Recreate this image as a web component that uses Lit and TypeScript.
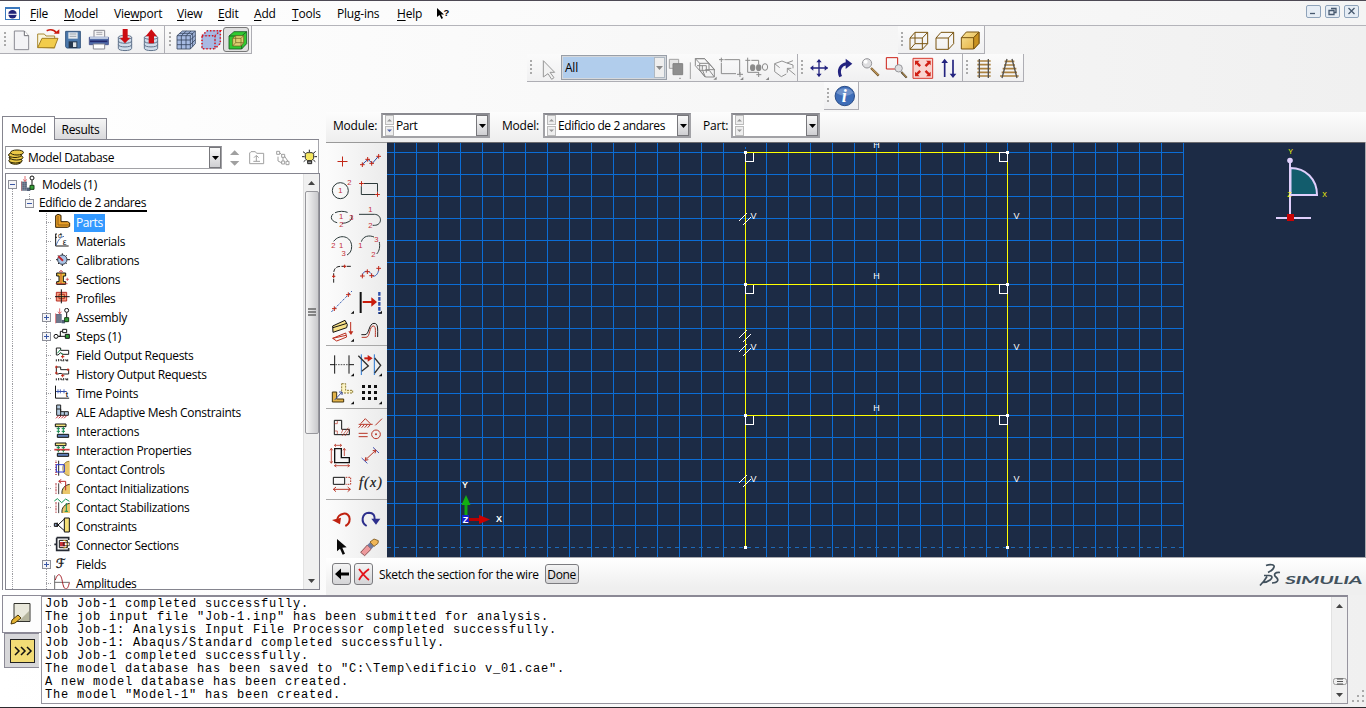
import { LitElement, html, svg, css, nothing } from "lit";
import { customElement } from "lit/decorators.js";
import { classMap } from "lit/directives/class-map.js";

// Icons are drawn on a grid of three units per CSS pixel.
const ico = (x: number, y: number, w: number, h: number, body: unknown) =>
  html`<svg class="ico" width=${w / 3} height=${h / 3} viewBox="${x} ${y} ${w} ${h}" fill="none" stroke-width="3">${body}</svg>`;

const num = (x: number, y: number, t: string) =>
  svg`<text x=${x} y=${y - 1} font-family="Liberation Sans, Arial, sans-serif" font-size="23" fill="#c4303a" text-anchor="middle">${t}</text>`;
const plus = (x: number, y: number, r = 7) =>
  svg`<path d="M${x - r} ${y}H${x + r}M${x} ${y - r}V${y + r}" stroke="#c22818" stroke-width="3"/>`;
const corner = (x: number, y: number) => svg`<path d="M${x} ${y}h-10l10-9z" fill="#111"/>`;

const menus: [string, string, string, number][] = [
  ["", "F", "ile", 34], ["", "M", "odel", 50], ["Vie", "w", "port", 63], ["", "V", "iew", 41],
  ["", "E", "dit", 36], ["", "A", "dd", 38], ["", "T", "ools", 45], ["Plu", "g", "-ins", 60], ["", "H", "elp", 40],
];

const dbCyl = svg`<path d="M355 112v33c0 9 40 9 40 0v-33" fill="#cfdcea" stroke="#62748c"/><path d="M355 123c0 9 40 9 40 0M355 134c0 9 40 9 40 0" stroke="#62748c"/><ellipse cx="375" cy="112" rx="20" ry="6" fill="#e3ecf5" stroke="#62748c"/>`;

const fileIcons = [
  ico(30, 84, 78, 72, svg`<path d="M43 93h30l13 14v42h-43z" fill="#f3f3f6" stroke="#8a8a92"/><path d="M73 93v14h13" fill="#fff" stroke="#6c6c74"/>`),
  ico(108, 84, 78, 72, svg`<path d="M113 142v-40h20l5 6h26v36z" fill="#fbf6dc" stroke="#a98a35"/><path d="M113 143l13-28h48l-11 28z" fill="#f2cc4b" stroke="#a37f23"/><path d="M140 92c12-5 22-3 29 6" stroke="#cc1c10" stroke-width="5"/><path d="M161 101h17v-13z" fill="#cc1c10"/>`),
  ico(186, 84, 78, 72, svg`<path d="M197 94h44v50h-41l-3-4z" fill="#4b78ab" stroke="#35567f"/><path d="M205 97h28v19h-28z" fill="#e6eaee"/><path d="M209 102h20M209 109h20" stroke="#9aa5af"/><path d="M206 124h26v20h-26z" fill="#26384e"/><path d="M219 127h10v14h-10z" fill="#dfe4e8"/>`),
  ico(264, 84, 78, 72, svg`<path d="M282 91h32v22h-32z" fill="#f5f5f5" stroke="#898991"/><path d="M289 97h18M289 103h18" stroke="#a6a6ac"/><path d="M268 112h57v22h-57z" fill="#4f6aa8" stroke="#4b5890"/><path d="M270 110h54v7h-54z" fill="#bcc8df"/><path d="M270 124h52" stroke="#23296c" stroke-width="5"/><path d="M280 132h34v15h-34z" fill="#fff" stroke="#898991"/>`),
  ico(342, 84, 78, 72, svg`${dbCyl}<path d="M368 87h15v26h8l-16 17-16-17h9z" fill="#cc0c12"/>`),
  ico(420, 84, 72, 72, svg`<g transform="translate(78 0)">${dbCyl}</g><path d="M446 130v-21h-9l17-21 17 21h-9v21z" fill="#cc0c12"/>`),
];
const meshIcons = [
  ico(519, 84, 75, 72, svg`<path d="M531 107l16-14h39v38l-15 16h-40z" fill="#a7bbe2"/><path d="M531 107h40v40h-40zM531 107l16-14h39l-15 14M586 93v38l-15 16M544 107v40M558 107v40M531 120h40l15-14M531 134h40l15-15M544 107l15-14M558 107l15-14M539 100h39v40" stroke="#34435c" stroke-width="2.400"/>`),
  ico(597, 84, 75, 72, svg`<path d="M609 107l16-15h39v38l-16 16h-39z" fill="#a9b9e2"/><path d="M609 107h39v39h-39zM609 107l16-15h39l-16 15M664 92v38l-16 16" stroke="#7888bd" stroke-width="2"/><path d="M609 107h39v39h-39zM609 107l16-15h39l-16 15M664 92v38l-16 16" stroke="#e01218" stroke-width="4.500" stroke-dasharray="4 6"/>`),
  html`<span class="pressed">${ico(678, 87, 75, 66, svg`<path d="M693 111l15-13h38v36l-15 16h-38z" fill="#31ca31"/><path d="M693 111h38v39h-38zM693 111l15-13h38l-15 13M746 98v36l-15 16" stroke="#155a20" stroke-width="2.500"/><path d="M704 118l9-8h24v21l-8 10h-25z" fill="#ddd072"/><path d="M704 118h25v23h-25zM704 118l9-8h24l-8 8M737 110v21l-8 10M713 110v21h24M713 131l-9 10" stroke="#6a5c1c" stroke-width="2"/>`)}</span>`,
];

const cube = svg`<path d="M15 27l15-17h38v34L52 61H15zM15 27h37v34M52 27l16-17"/>`;
const renderIcons = [
  ico(0, 0, 78, 72, svg`<g stroke="#7a5510" transform="translate(-3 3)">${cube}<path d="M30 10v34h38M30 44L15 61"/></g>`),
  ico(0, 0, 78, 72, svg`<g stroke="#7a5510" transform="translate(-3 3)">${cube}</g>`),
  ico(0, 0, 78, 72, svg`<defs><linearGradient id="gold" x1="0" y1="0" x2="1" y2="1"><stop stop-color="#f8e49a"/><stop offset="1" stop-color="#e3ac38"/></linearGradient></defs><g stroke="#7a5510" fill="url(#gold)" transform="translate(-5 2)">${cube}<path d="M52 27l16-17v34L52 61z" fill="#c99220"/></g>`),
];

const g = "#a2a2a2";
const selIcons = [
  ico(444, 98, 60, 78, svg`<path d="M451 111h28v27h-28z" fill="#e6e6e6" stroke=${g}/><path d="M462 124h29v33h-29z" fill="#8e8e8e" stroke="#828282"/><path d="M481 168h4" stroke="#777"/>`),
  ico(504, 98, 18, 78, svg`<path d="M514 120v50" stroke=${g}/>`),
  ico(522, 98, 78, 78, svg`<path d="M529 109v21l30 34h27v-22l-29-33zM529 109h28M542 123h28v21h-28zM534 130h28v21M529 109l14 15M557 109l30 33M543 144l15 20M559 142h28M550 130v12l9 22M571 144l15 20" stroke="#8b8b8b"/><path d="M593 172h-10l10-9z" fill="#888"/>`),
  ico(600, 98, 78, 78, svg`<path d="M607 122v32h44M616 112h46v43M600 112h14M607 106v14M654 156h18M663 149v15" stroke="#8b8b8b"/><path d="M673 173h-10l10-9z" fill="#888"/>`),
  ico(678, 98, 78, 78, svg`<path d="M686 106v44h34M679 114h15M697 114h22v12M712 157h15M719 150v14" stroke="#8b8b8b"/><ellipse cx="701" cy="136" rx="8" ry="10" fill="#8b8b8b"/><ellipse cx="719" cy="136" rx="8" ry="10" fill="#8b8b8b"/><ellipse cx="738" cy="134" rx="8" ry="10" stroke="#8b8b8b"/><path d="M750 173h-10l10-9z" fill="#888"/>`),
  ico(756, 98, 74, 78, svg`<path d="M767 124l22-8 15 6 18-7M767 124v24l20 15 15-8M767 124l15 12M804 122l18 6v10M805 138l24 20M805 138h12M805 138v13" stroke="#939393"/>`),
];
const viewIcons = [
  ico(858, 98, 78, 78, svg`<path d="M873 137h50M897 113v49" stroke="#23237f" stroke-width="4"/><path d="M870 137l10-8v16zM924 137l-10-8v16zM897 110l-8 10h16zM897 164l-8-10h16z" fill="#23237f"/>`),
  ico(936, 98, 78, 78, svg`<path d="M962 163c-9-18-1-37 18-39" stroke="#23237f" stroke-width="9"/><path d="M977 109l20 15-20 16z" fill="#23237f"/>`),
  ico(1014, 98, 78, 78, svg`<path d="M1053 137l23 23" stroke="#77582b" stroke-width="7"/><path d="M1055 138l20 20" stroke="#dfb36e" stroke-width="3"/><circle cx="1041" cy="123" r="14" fill="#dedee0" stroke="#96969a"/><circle cx="1037" cy="118" r="6" fill="#fff"/>`),
  ico(1092, 98, 78, 78, svg`<path d="M1099 106h34v34h-34z" stroke="#cc1f15"/><path d="M1144 149l16 17" stroke="#423620" stroke-width="6"/><path d="M1146 150l14 15" stroke="#dfb36e" stroke-width="3"/><circle cx="1136" cy="138" r="11" fill="#dedee0" stroke="#96969a"/>`),
  ico(1170, 98, 78, 78, svg`<path d="M1179 108h59v60h-59z" fill="#f9d5d0" stroke="#d63a30"/><path d="M1185 115h14l-5 5 9 9-5 5-9-9-4 4zM1232 115h-14l5 5-9 9 5 5 9-9 4 4zM1185 162h14l-5-5 9-9-5-5-9 9-4-4zM1232 162h-14l5-5-9-9 5-5 9 9 4-4z" fill="#d02014"/>`),
  ico(1248, 98, 78, 78, svg`<path d="M1274 164v-46M1299 112v46" stroke="#23237f" stroke-width="5"/><path d="M1264 122l10-13 10 13zM1289 154l10 13 10-13z" fill="#23237f"/>`),
];
const trackIcons = [
  ico(1353, 98, 78, 78, svg`<path d="M1372 116h40M1372 127h40M1372 139h40M1372 150h40M1372 161h40" stroke="#ab813f" stroke-width="5"/><path d="M1378 110v57M1405 110v57" stroke="#55524d" stroke-width="4"/>`),
  ico(1431, 98, 76, 78, svg`<path d="M1454 117h29M1452 128h33M1448 139h41M1445 150h46M1440 161h56" stroke="#ab813f" stroke-width="5"/><path d="M1461 110l-15 57M1476 110l15 57" stroke="#55524d" stroke-width="4"/>`),
];

// Sketcher toolbox
const cell = (c: number, y: number, body: unknown) => ico(18 + 84 * c, y, 84, 84, body);
const k = "#2c3a3a";
const tools: unknown[][] = [
  [
    cell(0, 105, plus(61.5, 148.5, 15)),
    cell(1, 105, svg`<path d="M120 158l18-16 13 12 19-22" stroke="#2d4ea2"/>${plus(121, 158)}${plus(137, 142)}${plus(149, 154)}${plus(170, 133)}`),
    cell(0, 189, svg`<circle cx="55" cy="236" r="24" stroke=${k}/>${num(55, 244, "1")}${num(82, 220, "2")}`),
    cell(1, 189, svg`<path d="M126 214.500h40.500v25M160 247.500h-42v-25" stroke=${k}/>${plus(118.5, 214.5)}${plus(166.5, 247.5)}`),
    cell(0, 273, svg`<ellipse cx="59" cy="316" rx="31" ry="18" stroke=${k} stroke-dasharray="38 14 38 6"/>${num(57, 323, "1")}${num(88, 326, "3")}${num(58, 347, "2")}`),
    cell(1, 273, svg`<path d="M111 307h46c24 0 25 33 0 33h-5" stroke=${k}/>${num(145, 302, "1")}${num(145, 349, "2")}`),
    cell(0, 357, svg`<path d="M35 388c18-24 54-16 54 16 0 13-6 21-14 25" stroke=${k}/>${num(34, 409, "2")}${num(57, 408, "1")}${num(65, 433, "3")}`),
    cell(1, 357, svg`<path d="M118 389c6-18 24-20 38-14M172 390c2 14 1 26-8 36" stroke=${k}/>${num(115, 408, "1")}${num(163, 391, "3")}${num(154, 435, "2")}`),
    cell(0, 441, svg`<path d="M35 512v-26c0-16 7-23 22-23h31" stroke="#222" stroke-dasharray="12 4"/>${plus(68, 463, 5)}${plus(35, 493, 5)}`),
    cell(1, 441, svg`<path d="M121 492c1-21 26-16 28-3 3 9 21 2 21-19" stroke="#3f64b5"/>${plus(121, 492)}${plus(136, 479)}${plus(149, 491)}${plus(170, 469)}`),
    cell(0, 525, svg`<path d="M28 600l62-63" stroke="#3f64b5" stroke-dasharray="8 4"/>${plus(37, 590)}${plus(79, 548)}${corner(96, 605)}`),
    cell(1, 525, svg`<path d="M116 540v63" stroke="#111" stroke-width="6"/><path d="M172 540v66" stroke="#2c4eab" stroke-width="7" stroke-dasharray="11 4"/><path d="M122 570h28" stroke="#c91c0c" stroke-width="6"/><path d="M148 556l17 14-17 14z" fill="#c91c0c"/>${corner(180, 605)}`),
    cell(0, 609, svg`<path d="M32 642l37-17 7 13-2 9-41 14z" fill="#f8e288" stroke="#111"/><path d="M33 647l42-13" stroke="#111"/><path d="M32 679l12 8 30-12-3-12zM32 679l40-9M86 630v34" stroke="#bd2e1f"/><path d="M79 658h15l-7 11z" fill="#bd2e1f"/>${corner(96, 689)}`),
    cell(1, 609, svg`<path d="M118 668h11c13 0 11-34 27-34 13 0 11 16 11 41" stroke="#1d1d1d"/><path d="M119 676h13c13 0 9-34 22-34 8 0 6 13 6 33" stroke="#b83527"/>`),
  ],
  [
    cell(0, 33, svg`<path d="M24 74h15M81 74h15M38 46v55M81 46v55" stroke="#151515"/><path d="M40 74h42" stroke="#555" stroke-dasharray="5 3"/>${corner(96, 109)}`),
    cell(1, 33, svg`<path d="M118 43v62M157 43v62" stroke="#2574cf"/><path d="M109 47l30 31-20 16M158 54l18 22-18 23" stroke="#303030" stroke-width="4"/><path d="M127 55h11" stroke="#ca1d11" stroke-width="6"/><path d="M137 45l15 10-15 10z" fill="#ca1d11"/>${corner(180, 109)}`),
    cell(0, 117, svg`<path d="M59 131h12v20h21v8H59z" fill="#fcf4c3" stroke="#8c7b36" stroke-dasharray="6 3"/><path d="M31 156h13v21h21v9H31z" fill="#e3b34a" stroke="#42340d"/><path d="M38 180l22-24M60 156v9M60 156h-9" stroke="#3c52a4"/>${corner(96, 193)}`),
    cell(1, 117, svg`${[124.5, 142.5, 160.5].map((x) => [139.5, 157.5, 175.5].map((y) => svg`<path d="M${x - 4.5} ${y - 4.5}h9v9h-9z" fill="#111"/>`))}${corner(180, 193)}`),
  ],
  [
    cell(0, 222, svg`<path d="M37 241h22v27h23v16H37z" stroke="#111"/><path d="M38 251h8v-8M38 273h8v9M63 268l-5 12M60 288l19-25M69 288l14-22" stroke="#b83527" stroke-width="2"/>`),
    cell(1, 222, svg`<path d="M110 253h42M116 251l14-15 15 15M110 263l8-9M119 263l8-9M128 263l8-9M137 263l8-9M160 256l20-20M110 280h27M110 290h27" stroke="#b83527"/><circle cx="162" cy="283" r="13" stroke="#b83527"/><circle cx="162" cy="283" r="3" fill="#b83527"/>`),
    cell(0, 306, svg`<path d="M38 326h20v27h24v15H38z" stroke="#111" stroke-width="4"/><path d="M38 316h20M28 326v43M67 326v22M38 377h44M42 312l-5 4 5 4M54 312l5 4-5 4M24 331l4-6 4 6M24 364l4 6 4-6M63 331l4-6 4 6M43 373l-6 4 6 4M77 373l6 4-6 4" stroke="#b83527" stroke-width="2.500"/>`),
    cell(1, 306, svg`<path d="M119 354l17 16M153 322l18 17" stroke="#4051b2"/><path d="M129 361l33-31M129 361l3-10M129 361l10-2M162 330l-3 10M162 330l-10 2" stroke="#b83527"/>`),
    cell(0, 390, svg`<path d="M34 412h34v21H34z" stroke="#111"/><path d="M71 412h15v21H71" stroke="#b83527" stroke-dasharray="5 3"/><path d="M34 448h51M42 441l-8 7 8 7M77 441l8 7-8 7" stroke="#b83527"/>`),
    cell(1, 390, svg`<text x="111" y="442" font-family="Liberation Serif, serif" font-size="42" font-style="italic" letter-spacing="0" fill="#111" stroke="#111" stroke-width=".7" textLength="69">f(x)</text>`),
  ],
  [
    cell(0, 495, svg`<path d="M45 541c2-23 37-29 38-4 0 12-5 17-13 21" stroke="#bf210f" stroke-width="6"/><path d="M30 540l27-7-3 20z" fill="#bf210f"/>`),
    cell(1, 495, svg`<path d="M134 558c-19-11-15-39 7-40 13 0 18 9 17 21" stroke="#2d2f8c" stroke-width="6"/><path d="M148 536h27l-13 18z" fill="#2d2f8c"/>`),
    cell(0, 579, svg`<path d="M45 597v37l9-8 8 18 7-3-8-18 13-1z" fill="#090909"/>`),
    cell(1, 579, svg`<path d="M116 637l20-22 12 12-20 20z" fill="#ee9a9c" stroke="#8b5355"/><path d="M136 615l10-10 12 12-10 10z" fill="#707a9e"/><path d="M144 606l12-9 13 5-1 8-12 9z" fill="#f0b657" stroke="#8d672e"/>`),
  ],
];

// Model tree icons
const t = (y: number, body: unknown) => ico(159, y, 54, 57, body);
const asmBody = svg`<path d="M168 132h17v27h-17z" fill="#536078"/><path d="M171 132v27M177 132v27M183 132v27M168 138h17M168 144h17M168 150h28M168 156h28" stroke="#aab1bd" stroke-width="1"/><path d="M185 150h10v10h-10z" fill="#536078"/><path d="M179 115v15M174 125l5 7 5-7M167 130v30" stroke="#cc252c" stroke-width="2"/><circle cx="200" cy="121" r="6" stroke="#111" fill="#fff"/><path d="M200 128v15" stroke="#111"/><path d="M194 143h12v12h-12z" fill="#36a239" stroke="#143c14"/>`;
const intBody = svg`<path d="M166 39h32v8h-32z" fill="#f5e47e" stroke="#111"/><path d="M172 70h34v9h-34z" fill="#607fb9" stroke="#111"/><path d="M175 47v20M190 47v20M170 53h10M170 61h10M185 53h10M185 61h10" stroke="#15894e"/>`;
const hatch = svg`<path d="M168 0v44" stroke="#b53c43" stroke-width="6" stroke-dasharray="2 3"/><path d="M176 0v45" stroke="#222"/>`;
const wedge = svg`<path d="M210 3v41h-24c-2-22 8-39 24-41z" fill="#eac76b"/><path d="M209 3c-15 3-25 19-23 41" stroke="#111"/>`;
const treeIcons: Record<string, unknown> = {
  Parts: t(303, svg`<path d="M167 311l7-4 9 3v19h20l6 4v10l-6 3h-36z" fill="#e99f28" stroke="#352204"/><path d="M174 312v27h34" stroke="#905e13"/>`),
  Materials: t(360, svg`<path d="M167 366v36h39M166 366h5M166 376h5M180 366h5" stroke="#171717"/><text x="174" y="378" font-size="20" font-family="Liberation Sans, sans-serif" fill="#171717">σ</text><path d="M168 400c8-19 13-24 24-27" stroke="#4a72b6"/><text x="188" y="399" font-size="26" font-family="Liberation Sans, sans-serif" fill="#171717">ε</text>`),
  Calibrations: t(417, svg`<path d="M187 424v38M168 443h42M174 430l26 26M200 430l-26 26" stroke="#222" stroke-width="3"/><circle cx="187" cy="443" r="14" fill="#a9c4e6" stroke="#333a49"/><path d="M189 446l-14-13" stroke="#c3262d" stroke-width="6"/>`),
  Sections: t(0, svg`<path d="M170 9h27v9h-7v17h7v8h-27v-8h7V18h-7z" fill="#ebbd3c" stroke="#111"/><path d="M183 4v39M167 41h36M197 28h10M202 23v10" stroke="#c42832" stroke-width="2"/><path d="M178 6l5-5 5 5" stroke="#c42832"/>`),
  Profiles: t(57, svg`<path d="M169 67h31v26h-31z" fill="#f39e7f" stroke="#b83027"/><path d="M177 73h16v13h-16z" fill="#f5b46e" stroke="#b83027"/><path d="M184 58v42M165 80h44" stroke="#151515"/>`),
  Assembly: t(114, asmBody),
  "Steps (1)": t(171, svg`<circle cx="168" cy="199" r="6" stroke="#151515" fill="#fff"/><path d="M175 199h6v-15h6M175 199h20" stroke="#151515"/><path d="M188 178h12v10h-12z" fill="#fff" stroke="#151515"/><path d="M196 193h12v12h-12z" fill="#2f9c35" stroke="#151515"/>`),
  "Field Output Requests": t(228, svg`<path d="M169 234h13v7h24v12h-18l-6-5-8 7h-5z" stroke="#222"/><path d="M172 250l10-12M182 250l8 3" stroke="#17864b"/>${plus(188, 260, 5)}<path d="M169 268v6M176 267v7M191 267v7M203 268v6M180 270h6v4M195 270h5v4" stroke="#222"/>`),
  "History Output Requests": t(285, svg`<path d="M169 291h13v8h24v13h-18l-8-2-6 2h-5z" stroke="#222"/>${plus(169, 291, 4)}${plus(169, 309, 4)}${plus(204, 299, 4)}${plus(188, 317, 5)}<path d="M169 325v6M176 324v7M191 324v7M203 325v6M180 327h6v4M195 327h5v4" stroke="#222"/>`),
  "Time Points": t(342, svg`<path d="M166.500 347v37.500h41" stroke="#171717"/><path d="M168 364.500h32" stroke="#3450a9"/><path d="M174 358v12M181 358v12M192 358v12" stroke="#3450a9" stroke-width="2.500"/><text x="197" y="381" font-size="20" font-weight="bold" font-family="Liberation Sans, sans-serif" fill="#171717">t</text>`),
  "ALE Adaptive Mesh Constraints": t(399, svg`<path d="M170 405h12v20h23v11h-35z" fill="#b4cbe0" stroke="#222"/><path d="M170 417h12v20M193 426v10" stroke="#222"/><path d="M168 445l8-8M176 445l8-8M184 445l8-8M192 445l8-8" stroke="#c12932"/>`),
  Interactions: t(33, intBody),
  "Interaction Properties": t(33, svg`${intBody}<path d="M163 59h46" stroke="#cd3a3d" stroke-width="5"/>`),
  "Contact Controls": t(90, svg`<g transform="translate(0 92)">${hatch}</g><path d="M209 92v45c-22 2-29-43 0-45z" fill="#eac76b"/><path d="M207 94c-25 2-25 40 0 43" stroke="#6c5b24" stroke-width="2"/><path d="M169 104h24v22h-24z" stroke="#2b38d0"/>`),
  "Contact Initializations": t(147, svg`<g transform="translate(0 160) scale(1 .72)">${hatch}</g><g transform="translate(0 161) scale(1 .7)">${wedge}</g><path d="M197 181v-27h-20M184 148l-8 6 8 6" stroke="#bb2a29"/>`),
  "Contact Stabilizations": t(204, svg`<g transform="translate(0 217) scale(1 .72)">${hatch}</g><g transform="translate(0 218) scale(1 .7)">${wedge}</g><path d="M163 213l9-7 13 12 12-11 11 7M199 219v25M194 244h10" stroke="#139151"/>`),
  Constraints: t(261, svg`<path d="M193 264h15v42h-15z" fill="#f5df76" stroke="#111"/><path d="M193 267l-19 18 19 17M172 278v13" stroke="#111"/><path d="M163 280h8v9h-8z" fill="#8ca1c5" stroke="#111"/>`),
  "Connector Sections": t(318, svg`<path d="M170 323h36v7M170 323v38h36v-7M163 343h8" stroke="#262a33" stroke-width="5"/><path d="M178 331h24v22h-24z" fill="#fff" stroke="#151515"/><path d="M180 336h15v13h-15z" fill="#cb343a"/><path d="M190 331c16 0 16 23 0 23" stroke="#d7a52a"/><path d="M190 338h18v9h-18z" stroke="#151515" stroke-width="2"/>`),
  Fields: t(375, svg`<text x="167" y="415" font-size="38" letter-spacing="0" font-family="DejaVu Sans, DejaVu Serif, serif" fill="#111" stroke="#111" stroke-width="1">ℱ</text>`),
  Amplitudes: t(432, svg`<path d="M164 436v42M163 457h46" stroke="#6e6e6e"/><path d="M166 450c6-20 16-24 21 4 5 31 16 29 21 4" stroke="#a52028"/>`),
};
const expandable = new Set(["Assembly", "Steps (1)", "Fields"]);

const xpBox = (x: number, open: boolean) =>
  svg`<rect x=${x - 4} y="5" width="9" height="9" fill="#f4f4f6" stroke="none"/><rect x=${x - 3.5} y="5.5" width="8" height="8" stroke="#8d8f98" stroke-width="1"/><path d="M${x - 2} 9.500h5${open ? "" : `M${x + 0.5} 7v5`}" stroke="#3a57a5" stroke-width="1"/>`;
const dots = (d: string) => svg`<path d=${d} stroke="#9d9da2" stroke-width="1" stroke-dasharray="1 1"/>`;

const xs = Array.from({ length: 37 }, (_, i) => Math.floor(745 + 21.91 * (i - 16))).filter((x) => x !== 745);
const ys = [152, 174, 196, 218, 240, 262, 284, 306, 328, 349, 371, 393, 415, 437, 459, 481, 503, 525];

const lines = [
  "Job Job-1 completed successfully.",
  'The job input file "Job-1.inp" has been submitted for analysis.',
  "Job Job-1: Analysis Input File Processor completed successfully.",
  "Job Job-1: Abaqus/Standard completed successfully.",
  "Job Job-1 completed successfully.",
  'The model database has been saved to "C:\\Temp\\edificio v_01.cae".',
  "A new model database has been created.",
  'The model "Model-1" has been created.',
];

@customElement("app-root")
export class AppRoot extends LitElement {
  static styles = css`
    :host { display: flex; flex-direction: column; width: 1366px; height: 708px; box-sizing: border-box; overflow: hidden;
      border-top: 1px solid #4d4954; border-bottom: 1px solid #2d2a2e; color: #000;
      background: linear-gradient(90deg, #fff, #f0f0f0); font: 12px/15px "Open Sans", "Noto Sans", sans-serif; letter-spacing: -0.22px; }
    * { box-sizing: border-box; }
    svg { display: block; flex: none; }
    .ico { overflow: hidden; }
    .menubar { height: 25px; flex: none; display: flex; align-items: center; padding-left: 5px; border-bottom: 1px solid #b4b4ba;
      background: linear-gradient(90deg, #fff, #f4f4f4); }
    .logo { margin-right: 10px; }
    .menu { flex: none; white-space: nowrap; }
    u { text-underline-offset: 2px; text-decoration-thickness: 1px; }
    .winbtns { margin-left: auto; display: flex; gap: 4px; padding: 0 7px 4px 0; }
    .bars { height: 86px; flex: none; }
    .barrow { display: flex; height: 28px; }
    .bar { display: flex; align-items: center; height: 28px; border-right: 1px solid #aeaeb4; border-bottom: 1px solid #aeaeb4;
      background: linear-gradient(#fbfbfb, #f0f0f1); }
    .grip { width: 2px; height: 15px; flex: none; background: repeating-linear-gradient(#aaa 0 2px, transparent 2px 4px); }
    .push { margin-left: 646px; }
    .row2 { padding-left: 527px; }
    .row3 { padding-left: 824px; }
    .pressed { display: block; border: 1px solid #777; border-radius: 3px; background: #dfdfdf; width: 26px; height: 25px; overflow: hidden; }
    .all { width: 106px; height: 25px; border: 1px solid #999fa8; outline: 1px solid #d5d8dc; outline-offset: -2px; background: #b1cdec; display: flex; align-items: center; padding-left: 3px; }
    .all .dd { margin-left: auto; width: 11px; height: 21px; border: 1px solid #aeb8c2; background: #eee; display: grid; place-items: center; margin-right: 1px; }
    .main { display: flex; height: 483px; flex: none; }
    .side { width: 322px; flex: none; display: flex; flex-direction: column; padding-left: 2px; }
    .tabs { display: flex; align-items: flex-end; height: 27px; flex: none; }
    .tab { border: 1px solid #85858f; border-bottom: none; width: 53px; height: 23px; display: grid; place-items: center; background: #fff; letter-spacing: 0; }
    .tab.off { height: 21px; width: 52px; background: linear-gradient(#f5f5f5, #d9d9dc); border-left: none; letter-spacing: -.35px; }
    .pane { width: 317px; height: 451px; flex: none; border-left: 1px solid #85858f; background: #fff; padding: 0 0 0 2px; display: flex; flex-direction: column; }
    .edge { height: 1px; margin: 0 0 0 49px; background: #85858f; flex: none; }
    .tools { height: 33px; flex: none; display: flex; align-items: center; border-right: 1px solid #a5a5ab; padding-top: 2px; }
    .combo { display: flex; align-items: center; background: #fff; border: 2px solid #a2a2a6; border-top-color: #8a8a90; height: 25px; letter-spacing: -.42px; }
    .db { width: 218px; height: 23px; border-width: 1px; padding-left: 1px; letter-spacing: -.35px; }
    .arrow { margin-left: auto; border: 1px solid #77777b; width: 12px; align-self: stretch; display: grid; place-items: center; background: linear-gradient(#fafafa, #cfcfd2); }
    .dbl { margin-left: 3px; }
    .tree { flex: 1; min-height: 0; border: 1px solid #85858f; width: 315px; display: flex; overflow: hidden; }
    .rows { flex: 1; overflow: hidden; padding-top: 1px; }
    .trow { display: flex; align-items: center; height: 19px; white-space: nowrap; }
    .lbl { margin-left: 3px; padding: 0 2px; height: 18px; line-height: 17px; letter-spacing: -.3px; }
    .lbl.sel { background: #3399ff; color: #fff; letter-spacing: -.42px; }
    .root { border-bottom: 2px solid #000; height: 16px; line-height: 13px; padding-right: 1px; letter-spacing: -.42px; }
    .sb { width: 16px; flex: none; background: #f0f0f0; border-left: 1px solid #e2e2e2; display: flex; flex-direction: column; align-items: center; }
    .sb .a { height: 17px; flex: none; display: grid; place-items: center; }
    .thumb { width: 14px; height: 243px; border: 1px solid #97979c; border-radius: 2px; background: linear-gradient(90deg, #f6f6f6, #c9c9cc); display: grid; place-items: center; }
    .sp { flex: 1; }
    .work { flex: 1; display: flex; flex-direction: column; padding-left: 4px; min-width: 0; }
    .modbar { height: 30px; flex: none; display: flex; align-items: center; background: linear-gradient(#fdfdfd, #eee); padding: 0 0 3px 7px; white-space: nowrap; }
    .mlabel { flex: none; }
    .spin { flex: none; margin: 0 2px 0 2px; }
    .stage { display: flex; height: 416px; flex: none; }
    .box { width: 61px; flex: none; overflow: hidden; background: linear-gradient(90deg, #fcfcfc, #ebebeb); border-top: 1px solid #999; }
    .sect { display: grid; grid-template-columns: 28px 28px; grid-auto-rows: 28px; padding: 5px 0 1px 2px; border-bottom: 1px solid #a8a8a8; }
    .sect.s0 { padding-top: 4px; padding-bottom: 2px; }
    .sect.s3 { border: none; padding-bottom: 0; }
    .view { flex: none; }
    .prompt { flex: 1; display: flex; align-items: center; background: linear-gradient(#fff, #efefef 80%); padding: 0 3px 5px 6px; }
    .btn { height: 22px; width: 19px; border: 1px solid #7b7b7f; border-radius: 3px; background: linear-gradient(#f4f4f4, #d4d4d6); display: grid; place-items: center; margin-right: 3px; flex: none; }
    .done { width: 34px; height: 20px; margin-left: 6px; letter-spacing: -.35px; }
    .ptxt { margin-left: 3px; letter-spacing: -.32px; }
    .simulia { margin-left: auto; }
    .bottom { flex: 1; display: flex; min-height: 0; }
    .mtabs { width: 41px; flex: none; display: flex; flex-direction: column; }
    .mt { border: 1px solid #8c8a96; border-right: none; display: grid; place-items: center; background: #fdfdfd; }
    .m1 { margin-left: 2px; height: 38px; }
    .m2 { margin: 0 2px 0 4px; height: 35px; background: #d7d7d9; }
    .log { width: 1307px; height: 109px; flex: none; background: #fff; border: 1px solid #96949e; border-top: 2px solid #8b8995; display: flex; }
    .lines { flex: 1; padding: 1px 0 0 3px; overflow: hidden; white-space: pre; font: 12px/13px "Liberation Mono", monospace; letter-spacing: .799px; }
    .corner { align-self: flex-end; margin: 0 0 4px 4px; }
  `;

  private arrow = (c = "#000") => html`<svg width="7" height="4" viewBox="0 0 7 4"><path d="M0 0h7L3.500 4z" fill=${c} /></svg>`;
  private up = html`<svg width="7" height="4" viewBox="0 0 7 4"><path d="M0 4h7L3.500 0z" fill="#444" /></svg>`;

  private spinner(c: string) {
    return html`<svg class="spin" width="9" height="21" viewBox="0 0 9 21" fill="none"><rect x=".5" y=".5" width="8" height="9" fill="#eee" stroke="#bbb"/><rect x=".5" y="11.500" width="8" height="9" fill="#eee" stroke="#bbb"/><path d="M2 6.500h5L4.500 4z" fill="#999"/><path d="M2 14.500h5L4.500 17z" fill=${c}/></svg>`;
  }

  private menubar() {
    return html`<div class="menubar">
      <svg class="logo" width="15" height="13" viewBox="0 0 15 13"><rect x=".5" y=".5" width="14" height="12" fill="#fff" stroke="#3b78bd"/><path d="M0 0h15v2H0z" fill="#3b78bd"/><circle cx="7.500" cy="7.300" r="4.200" fill="#22237a"/><path d="M3 7.300h9" stroke="#fff"/></svg>
      ${menus.map(([a, b, c, w]) => html`<span class="menu" style="width:${w}px">${a}<u>${b}</u>${c}</span>`)}
      <svg width="14" height="13" viewBox="0 0 14 13"><path d="M0 1v9l2.500-2 2 4 1.500-1-2-3.500h3z"/><text x="6.500" y="9" font-size="9.500" font-weight="bold" font-family="Liberation Sans, sans-serif">?</text></svg>
      <span class="winbtns">${["M3 8.500h5", "M5 3.500h5v4h-2M3 5.500h5v4h-5z", "M3.500 3l6 6M9.500 3l-6 6"].map((d) => html`<svg width="15" height="13" viewBox="0 0 15 13" fill="none"><rect x=".5" y=".5" width="14" height="12" rx="1.500" fill="#e6edf5" stroke="#8fa3ba"/><path d=${d} transform="translate(1)" stroke="#47596f" stroke-width="1.300"/></svg>`)}</span>
    </div>`;
  }

  private bars() {
    return html`<div class="bars">
      <div class="barrow">
        <div class="bar" style="width:165px;padding-left:4px"><span class="grip"></span><span style="width:4px"></span>${fileIcons.slice(0, 5)}<span style="margin-right:-2px">${fileIcons[5]}</span></div>
        <div class="bar" style="width:87px;padding-left:4px"><span class="grip"></span><span style="width:2px"></span>${meshIcons}</div>
        <div class="bar push" style="width:87px;padding-left:3px"><span class="grip"></span><span style="width:4px"></span>${renderIcons}</div>
      </div>
      <div class="barrow row2">
        <div class="bar" style="width:271px;padding-left:3px"><span class="grip"></span>
          ${ico(39, 98, 84, 78, svg`<path d="M73 115l34 35h-14l12 16-7 5-11-17-14 10z" stroke="#979797" fill="#f2f2f2"/>`)}
          <div class="all" style="margin-left:1px">All<span class="dd">${this.arrow("#8a8a8a")}</span></div>
          ${selIcons}</div>
        <div class="bar" style="width:165px;padding-left:3px"><span class="grip"></span><span style="width:3px"></span>${viewIcons}</div>
        <div class="bar" style="width:61px;padding-left:3px"><span class="grip"></span><span style="width:3px"></span>${trackIcons}</div>
      </div>
      <div class="barrow row3">
        <div class="bar" style="width:35px;padding-left:3px"><span class="grip"></span>
          <svg width="26" height="26" viewBox="0 0 26 26"><circle cx="15.800" cy="13" r="9.700" fill="#3e6db8" stroke="#284b87"/><path d="M7.300 10a9 7 0 0 1 17 0q-8 6-17 0z" fill="#6f92cb"/><text x="12.800" y="19" font-size="18" font-style="italic" font-weight="bold" font-family="Liberation Serif, serif" fill="#fff">i</text></svg>
        </div>
      </div>
    </div>`;
  }

  private tree() {
    const names = Object.keys(treeIcons);
    return html`<div class="tree">
      <div class="rows">
        <div class="trow">
          <svg width="15" height="19" viewBox="6 0 15 19" fill="none">${dots("M12.5 14v5")}${xpBox(12, true)}</svg>
          ${ico(63, 190, 48, 57, svg`<g transform="translate(-104 78)">${asmBody}</g>`)}
          <span class="lbl">Models (1)</span>
        </div>
        <div class="trow">
          <svg width="33" height="19" viewBox="6 0 33 19" fill="none">${dots("M12.5 0v19")}${dots("M29.5 0v5")}${xpBox(29, true)}</svg>
          <span class="root">Edificio de 2 andares</span>
        </div>
        ${names.map((n) => html`<div class="trow">
          <svg width="47" height="19" viewBox="6 0 47 19" fill="none">${dots("M12.5 0v19")}${dots("M46.5 0v19")}${dots("M46 9.500h6")}${expandable.has(n) ? xpBox(46, false) : nothing}</svg>
          ${treeIcons[n]}<span class=${classMap({ lbl: true, sel: n === "Parts" })}>${n}</span>
        </div>`)}
      </div>
      <div class="sb"><span class="a">${this.up}</span>
        <span class="thumb"><svg width="8" height="9" viewBox="0 0 8 9"><path d="M0 1h8M0 4h8M0 7h8" stroke="#666" stroke-width="1.500"/></svg></span>
        <span class="sp"></span><span class="a">${this.arrow("#444")}</span></div>
    </div>`;
  }

  private side() {
    return html`<div class="side">
      <div class="tabs"><span class="tab">Model</span><span class="tab off">Results</span></div>
      <div class="pane">
        <div class="edge"></div>
        <div class="tools">
          <div class="combo db">
            <svg width="18" height="17" viewBox="0 0 18 17" fill="#eac846" stroke="#2a2306"><path d="M2 11.500c0 5 13 5 13 0M2 8c0 5 13 5 13 0z"/><ellipse cx="8.500" cy="11.500" rx="6.500" ry="2.500"/><ellipse cx="9.500" cy="8.500" rx="6.500" ry="2.500"/><ellipse cx="8" cy="6" rx="6.500" ry="2.500"/><ellipse cx="10" cy="3.500" rx="6.500" ry="2.500"/></svg>
            <span class="dbl">Model Database</span><span class="arrow">${this.arrow()}</span>
          </div>
          ${ico(666, 102, 66, 66, svg`<path d="M690 126h28l-14-14zM690 144h28l-14 14z" fill="#a0a0a0"/>`)}
          ${ico(732, 102, 78, 66, svg`<path d="M749 152v-32l4-4h13l4 5h21v31zM760 145h20M769 145v-16M762 134l7-7 7 7" stroke="#a0a0a0"/>`)}
          ${ico(810, 102, 78, 66, svg`<path d="M830 115h9v9h-9zM845 124h9v9h-9zM845 144h9v9h-9zM858 145h9v10h-9zM839 119l6 6M849 133v11M834 131v13l12 6M854 130l10 15" stroke="#a0a0a0"/>`)}
          ${ico(888, 102, 66, 66, svg`<path d="M928 110v7M909 116l8 6M947 115l-8 7M906 131h8M943 131h8M911 146l6-5M946 146l-6-5" stroke="#222"/><path d="M920 119h17l4 5v12l-6 7h-13l-6-7v-12z" fill="#f5e65f" stroke="#333"/><path d="M923 144h12v8h-12z" fill="#999" stroke="#222"/>`)}
        </div>
        ${this.tree()}
      </div>
    </div>`;
  }

  private viewport() {
    const wt = (x: number, y: number, s: string, c = "#fff", fs = 9) =>
      svg`<text x=${x} y=${y} text-anchor="middle" font-size=${fs} fill=${c}>${s}</text>`;
    const par = (y: number) => svg`<path d="M739 ${y + 8}l8-8M743 ${y + 12}l8-8" stroke="#fff" shape-rendering="auto"/>`;
    return html`<svg class="view" width="979" height="416" viewBox="387 142 979 416" fill="none" font-family="Liberation Sans, Arial, sans-serif" letter-spacing="0" shape-rendering="crispEdges">
      <rect x="387" y="142" width="979" height="416" fill="#1c2b45"/>
      <path d="${xs.map((x) => `M${x + 0.5} 143v414`).join("")}${ys.map((y) => `M387 ${y + 0.5}h797`).join("")}" stroke="#0b6dd6"/>
      <path d="M387 547.500h797" stroke="#1c69b8" stroke-dasharray="4 4"/>
      <path d="M745.500 147v2" stroke="#0b6dd6"/>
      <path d="M745.500 152v395M1007.500 152v395M745 152.500h262M745 284.500h262M745 415.500h262" stroke="#ff0"/>
      ${[152, 284, 415].map((y) => svg`<path d="M745.500 ${y + 0.5}h8v9h-8zM999.500 ${y + 0.5}h8v9h-8z" stroke="#fff"/>`)}
      <path d="M747 152.500h252M747 284.500h252M747 415.500h252" stroke="#ff0"/>
      ${[152, 284, 415, 547].map((y) => svg`<path d="M744 ${y - 1}h3v3h-3zM1006 ${y - 1}h3v3h-3z" fill="#fff"/>`)}
      ${[148, 279, 411].map((y) => wt(876.5, y, "H"))}
      ${[219, 350, 482].map((y) => [wt(753.5, y, "V"), wt(1016.5, y, "V")])}
      ${[213, 330, 344, 475].map(par)}
      <g shape-rendering="auto">
        <path d="M466 518v-14" stroke="#10a510" stroke-width="3"/><path d="M461.500 505h9L466 495z" fill="#12b012"/>
        <path d="M469 519.500h11" stroke="#b90000" stroke-width="3"/><path d="M479 515v9l11-4.500z" fill="#c00"/>
        <rect x="462" y="515" width="7" height="8" fill="#141ecb"/>
        <g font-weight="bold">${wt(465, 488, "Y")}${wt(465.5, 523, "Z", "#fff", 9)}${wt(499, 522, "X", "#fff", 9)}</g>
        <path d="M1290.500 168c15 0 26.500 11 26.500 27h-26.500z" fill="#125c6c" stroke="#e0cffc" stroke-width="2"/>
        <path d="M1290 160v56M1276 218h35" stroke="#e0cffc" stroke-width="2"/>
        <circle cx="1290" cy="160.500" r="2.800" fill="#e0cffc"/><rect x="1287" y="214" width="7" height="7" fill="#c90505"/>
        ${wt(1290.5, 154, "Y", "#ff0", 7)}${wt(1324.5, 197, "X", "#ff0", 7)}${wt(1289.5, 197, "Z", "#ff0", 7)}
      </g>
      <path d="M387 142.500h979" stroke="#6a6a6e"/><path d="M387 557.500h979M1365.500 142v416" stroke="#a9a9ae"/>
    </svg>`;
  }

  render() {
    return html`${this.menubar()}${this.bars()}
      <div class="main">
        ${this.side()}
        <div class="work">
          <div class="modbar">
            <span class="mlabel" style="width:48px">Module:</span>
            <div class="combo" style="width:109px">${this.spinner("#5566a8")}Part<span class="arrow">${this.arrow()}</span></div>
            <span class="mlabel" style="width:41px;margin-left:12px">Model:</span>
            <div class="combo" style="width:148px">${this.spinner("#999")}Edificio de 2 andares<span class="arrow">${this.arrow()}</span></div>
            <span class="mlabel" style="width:28px;margin-left:12px">Part:</span>
            <div class="combo" style="width:89px">${this.spinner("#999")}<span class="arrow">${this.arrow()}</span></div>
          </div>
          <div class="stage">
            <div class="box">${tools.map((s, i) => html`<div class="sect s${i}">${s}</div>`)}</div>
            ${this.viewport()}
          </div>
          <div class="prompt">
            <span class="btn"><svg width="14" height="12" viewBox="0 0 14 12"><path d="M0 6l6-5.500V4.500h8v3H6V11.500z"/></svg></span>
            <span class="btn"><svg width="12" height="13" viewBox="0 0 12 13"><path d="M1 1c3 4 6 8 10 11M11 1C7 4 3 8 1 12" stroke="#e3131a" stroke-width="1.800" fill="none"/></svg></span>
            <span class="ptxt">Sketch the section for the wire</span><span class="btn done">Done</span>
            <svg class="simulia" width="105" height="26" viewBox="1259 561 105 26" fill="none"><path d="M1267 565.500c4-1.500 9-1 8 1.500-.500 2.500-3 4-6 5.500M1265 575.500h5c4 0 3.500 2.500 1 4.500-2 1.500-5 2.500-7 2.500l4-6M1264 582l-3 3.500M1281 572.500c-5-.500-7 2-4 4.500 3.500 3 1.500 6-4 6" stroke="#40505c" stroke-width="1.700"/><text x="1286" y="583.500" font-size="12" font-style="italic" font-weight="bold" font-family="Lato, sans-serif" fill="#43525e" textLength="77" lengthAdjust="spacingAndGlyphs">SIMULIA</text></svg>
          </div>
        </div>
      </div>
      <div class="bottom">
        <div class="mtabs">
          <span class="mt m1"><svg width="26" height="24" viewBox="0 0 26 24"><path d="M5 1.500h16v18H5z" fill="#e9e8db" stroke="#33332d"/><path d="M20 19V9L10 19z" fill="#b5b49d"/><path d="M2 22l1-4 6-5 3 3-6 5z" fill="#e3b232" stroke="#4d3909"/></svg></span>
          <span class="mt m2"><svg width="25" height="24" viewBox="0 0 25 24"><rect x=".5" y=".5" width="24" height="23" fill="#f2dc76" stroke="#222"/><path d="M5 8l4 4-4 4M11 8l4 4-4 4M17 8l4 4-4 4" stroke="#111" stroke-width="1.500" fill="none"/></svg></span>
        </div>
        <div class="log">
          <div class="lines">${lines.map((l) => html`<div>${l}</div>`)}</div>
          <div class="sb"><span class="a">${this.up}</span><span class="sp"></span>
            <svg width="14" height="9" viewBox="0 0 14 9" fill="none"><rect x=".5" y="1.500" width="13" height="6" rx="2" stroke="#999"/><path d="M4 2h6M4 4.500h6M4 7h6" stroke="#555"/></svg>
            <span class="a">${this.arrow("#444")}</span></div>
        </div>
        <svg class="corner" width="13" height="13" viewBox="0 0 13 13"><path d="M10 0h2v2h-2zM5 5h2v2h-2zM10 5h2v2h-2zM0 10h2v2h-2zM5 10h2v2h-2zM10 10h2v2h-2z" fill="#aaa"/></svg>
      </div>`;
  }
}
